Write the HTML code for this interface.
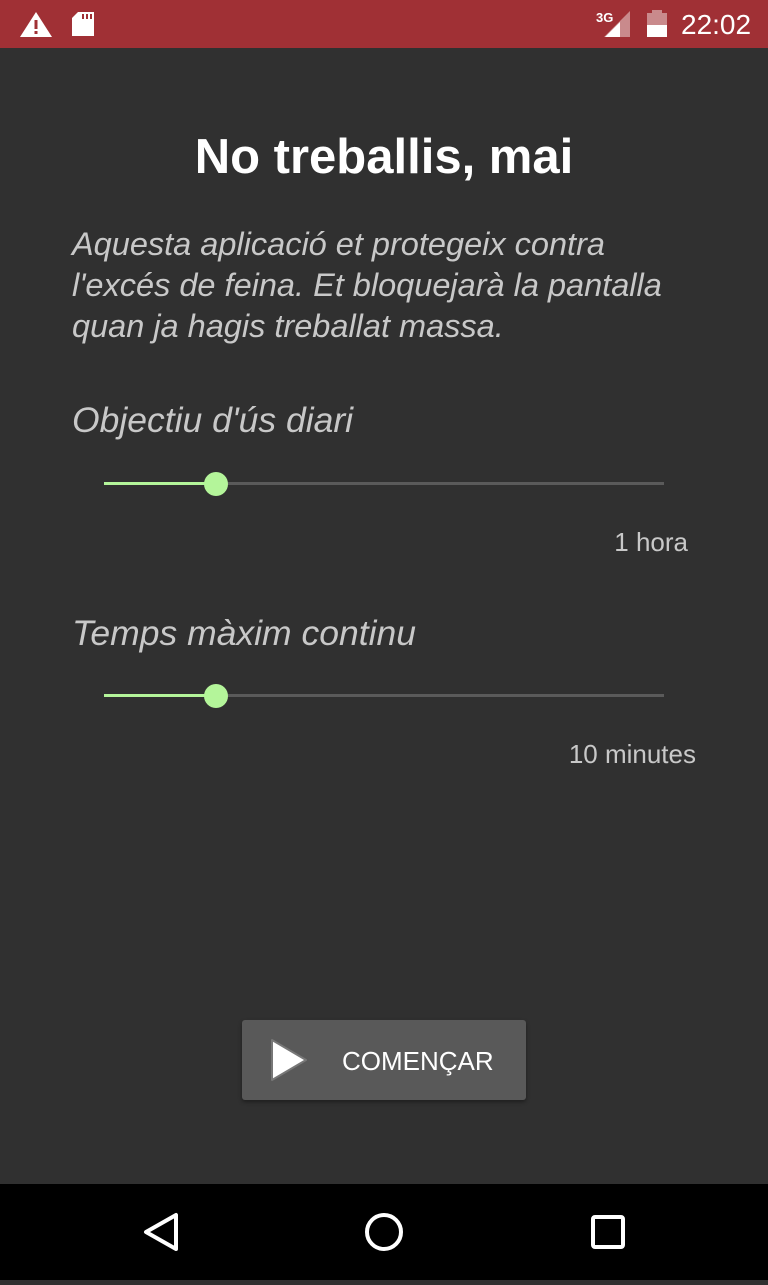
<!DOCTYPE html>
<html><head><meta charset="utf-8"><style>
body{margin:0;width:768px;height:1280px;background:#303030;font-family:"Liberation Sans",sans-serif;position:relative;overflow:hidden}
.sb{position:absolute;left:0;top:0;width:768px;height:48px;background:#a03035}
.nav{position:absolute;left:0;top:1184px;width:768px;height:96px;background:#000}
.t{position:absolute;color:#c8c8c8;white-space:nowrap}
h1{position:absolute;top:129px;left:0;width:768px;text-align:center;margin:0;font-size:49px;color:#fff;font-weight:bold}
.it{font-style:italic;font-size:32.5px}
.track{position:absolute;left:104px;width:560px;height:3px;background:#5a5a5a}
.fill{position:absolute;left:0;top:0;height:3px;background:#b4f59a}
.thumb{position:absolute;width:24px;height:24px;border-radius:50%;background:#b4f59a}
</style></head><body>
<div class="sb">
<svg width="768" height="48" style="position:absolute;left:0;top:0">
<polygon points="36,12 52,37 20,37" fill="#fff"/><rect x="34.5" y="20" width="3" height="9" fill="#a03035"/><rect x="34.5" y="31" width="3" height="3" fill="#a03035"/>
<path d="M78,12 h16 v24 h-22 v-18 z" fill="#fff"/><rect x="82" y="14" width="2" height="5" fill="#a03035"/><rect x="86" y="14" width="2" height="5" fill="#a03035"/><rect x="90" y="14" width="2" height="5" fill="#a03035"/>
<text x="596" y="22" font-size="13" font-weight="bold" fill="#fff" font-family="Liberation Sans">3G</text>
<polygon points="630,11 630,37 604,37" fill="#c98a8c"/><polygon points="620,22 620,37 605,37" fill="#fff"/>
<rect x="647" y="13" width="20" height="24" fill="#c98a8c"/><rect x="647" y="25" width="20" height="12" fill="#fff"/><rect x="652" y="10" width="10" height="4" fill="#c98a8c"/>
<text x="681" y="34" font-size="28" fill="#fff" font-family="Liberation Sans">22:02</text>
</svg></div>
<h1>No treballis, mai</h1>
<div class="t it" style="left:72px;top:224px;line-height:41px">Aquesta aplicació et protegeix contra<br>l'excés de feina. Et bloquejarà la pantalla<br>quan ja hagis treballat massa.</div>
<div class="t it" style="left:72px;top:400px;font-size:35.5px">Objectiu d'ús diari</div>
<div class="track" style="top:482px"><div class="fill" style="width:112px"></div></div>
<div class="thumb" style="left:204px;top:472px"></div>
<div class="t" style="right:80px;top:527px;font-size:26px">1 hora</div>
<div class="t it" style="left:72px;top:613px;font-size:35.5px">Temps màxim continu</div>
<div class="track" style="top:694px"><div class="fill" style="width:112px"></div></div>
<div class="thumb" style="left:204px;top:684px"></div>
<div class="t" style="right:72px;top:739px;font-size:26px">10 minutes</div>
<div style="position:absolute;left:242px;top:1020px;width:284px;height:80px;background:#595959;border-radius:3px;box-shadow:0 2px 4px rgba(0,0,0,.4)">
<svg width="50" height="50" style="position:absolute;left:24px;top:15px"><polygon points="6,5 40,25 6,45" fill="#fff" stroke="#777" stroke-width="2" stroke-linejoin="round"/></svg>
<div style="position:absolute;left:100px;top:26px;color:#fff;font-size:26px">COMENÇAR</div></div>
<div class="nav"><svg width="768" height="96">
<polygon points="146,48 176,31 176,65" fill="none" stroke="#fff" stroke-width="4" stroke-linejoin="round"/>
<circle cx="384" cy="48" r="17" fill="none" stroke="#fff" stroke-width="4"/>
<rect x="593" y="33" width="30" height="30" rx="2" fill="none" stroke="#fff" stroke-width="4"/>
</svg></div>
</body></html>
